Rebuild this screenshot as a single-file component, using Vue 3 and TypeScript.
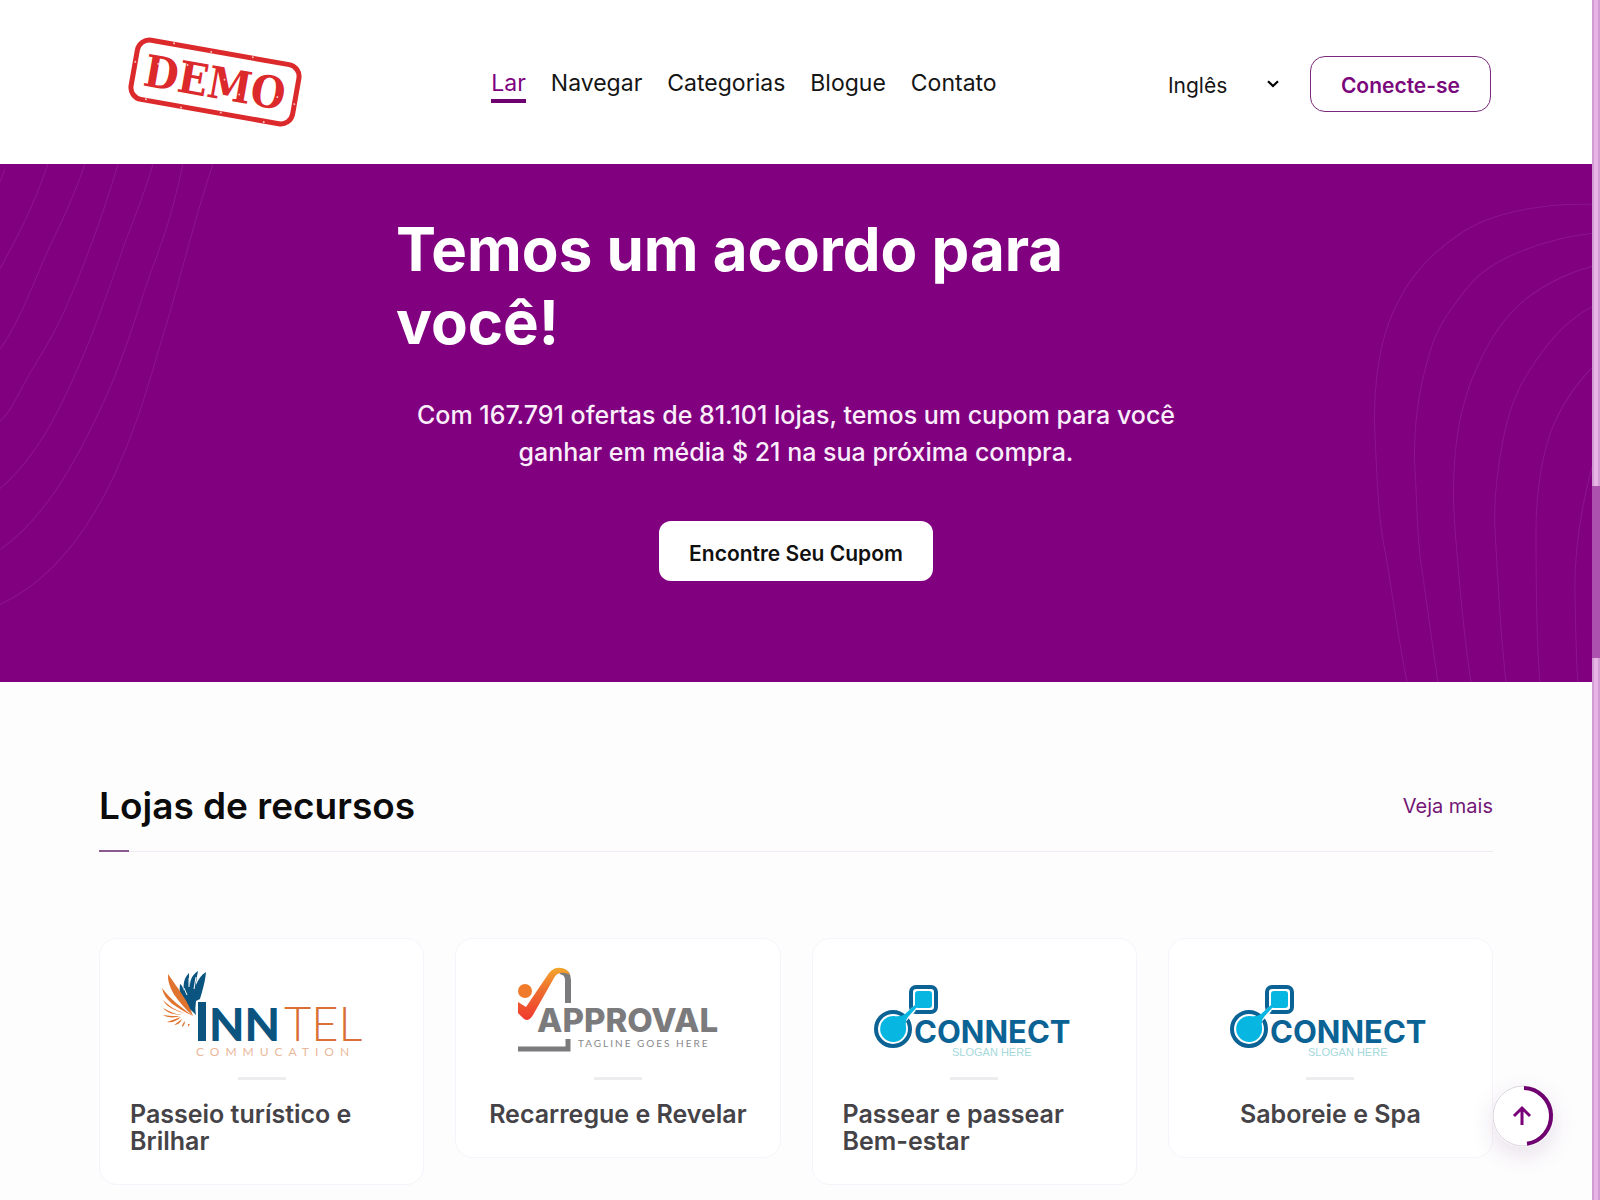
<script setup lang="ts">
import { ref } from 'vue'

interface NavItem {
  label: string
  href: string
  active?: boolean
}

interface Store {
  name: string
  logo: 'inntel' | 'approval' | 'connect'
}

const language = ref('Inglês')

const navItems: NavItem[] = [
  { label: 'Lar', href: '#lar', active: true },
  { label: 'Navegar', href: '#navegar' },
  { label: 'Categorias', href: '#categorias' },
  { label: 'Blogue', href: '#blogue' },
  { label: 'Contato', href: '#contato' },
]

const stores: Store[] = [
  { name: 'Passeio turístico e Brilhar', logo: 'inntel' },
  { name: 'Recarregue e Revelar', logo: 'approval' },
  { name: 'Passear e passear Bem-estar', logo: 'connect' },
  { name: 'Saboreie e Spa', logo: 'connect' },
]

const leftWaves: string[] = [
  'M213 0C192 60 181 110 163 166S108 378 0 426',
  'M183 0C174 40 168 60 153 99S128 178 107 223S52 338 0 373',
  'M153 0C144 30 137 45 127 71S104 138 83 186S38 283 0 314',
  'M118 0C106 40 94 72 80 106S58 158 37 191S14 236 0 249',
  'M85 0C75 28 66 48 53 73S22 150 0 179',
  'M48 0C32 44 18 70 0 101',
  'M5 5L0 17',
]

const rightWaves: string[] = [
  'M253 39C220 38 195 41 167 48S122 65 100 83S62 122 50 153S34 225 36 263S39 340 45 369S60 465 68 501',
  'M253 67C220 71 194 78 167 91S130 116 113 139S92 176 85 203S74 265 76 296S78 360 82 386S94 470 99 501',
  'M253 99C230 105 212 113 193 126S160 155 147 179S129 216 123 239S113 300 115 336S125 460 132 501',
  'M253 138C232 149 215 165 200 186S177 220 170 243S154 315 156 353S162 460 167 501',
  'M253 197C235 215 223 232 213 256S197 320 197 353S197 460 201 501',
  'M253 293C240 340 235 380 236 419S237 480 239 501',
]
</script>

<template>
  <div class="page">
    <header class="header">
      <a class="brand" href="#lar" aria-label="DEMO">
        <svg width="192" height="104" viewBox="0 0 192 104">
          <g transform="rotate(10 87 52)">
            <rect x="5" y="22" width="164" height="60" rx="12" fill="none" stroke="#dc2a2c" stroke-width="5" />
            <text x="87" y="68" text-anchor="middle" class="stamp">DEMO</text>
            <g fill="#fff" opacity="0.7">
              <circle cx="28" cy="44" r="1" /><circle cx="34" cy="58" r="1" /><circle cx="57" cy="40" r="1" />
              <circle cx="66" cy="62" r="1" /><circle cx="96" cy="48" r="1" /><circle cx="113" cy="60" r="1" />
              <circle cx="136" cy="42" r="1" /><circle cx="151" cy="56" r="1" /><circle cx="140" cy="64" r="1" />
              <circle cx="40" cy="21" r="1" /><circle cx="78" cy="23" r="1" /><circle cx="120" cy="21" r="1" />
              <circle cx="58" cy="83" r="1" /><circle cx="98" cy="81" r="1" /><circle cx="142" cy="83" r="1" />
              <circle cx="5" cy="46" r="1" /><circle cx="169" cy="60" r="1" /><circle cx="22" cy="81" r="1" />
            </g>
          </g>
        </svg>
      </a>

      <nav class="nav">
        <a
          v-for="item in navItems"
          :key="item.label"
          :href="item.href"
          :class="['nav-link', { active: item.active }]"
        >{{ item.label }}</a>
      </nav>

      <div class="actions">
        <div class="language">
          <select v-model="language" aria-label="Idioma">
            <option>Inglês</option>
            <option>Português</option>
          </select>
          <svg class="chevron" width="12" height="8" viewBox="0 0 12 8">
            <path d="M1 1.2L6 6L11 1.2" fill="none" stroke="#000" stroke-width="2.2" />
          </svg>
        </div>
        <button type="button" class="login">Conecte-se</button>
      </div>
    </header>

    <section class="hero">
      <svg class="waves waves-left" viewBox="0 0 253 501" preserveAspectRatio="none">
        <path v-for="d in leftWaves" :key="d" :d="d" />
      </svg>
      <svg class="waves waves-right" viewBox="0 0 253 501" preserveAspectRatio="none">
        <path v-for="d in rightWaves" :key="d" :d="d" />
      </svg>
      <div class="hero-inner">
        <h1>Temos um acordo para você!</h1>
        <p>Com 167.791 ofertas de 81.101 lojas, temos um cupom para você ganhar em média $ 21 na sua próxima compra.</p>
        <button type="button" class="cta">Encontre Seu Cupom</button>
      </div>
    </section>

    <main class="stores">
      <div class="section-head">
        <h2>Lojas de recursos</h2>
        <a href="#lojas">Veja mais</a>
      </div>

      <div class="grid">
        <article v-for="store in stores" :key="store.name" class="card">
          <svg v-if="store.logo === 'inntel'" class="logo" width="200" height="96" viewBox="0 0 200 96">
            <g fill="#0b5480">
              <path d="M33 47C22 42 16 33 18 19C20 20 21 23 22 26C21 19 22 13 27 8C27 13 27 17 28 21C28 15 30 10 36 6C35 11 34 16 34 20C36 15 39 10 44 7C43 18 40 27 38 34L34 36Z" />
              <path d="M36 37H44V76H36Z" />
              <path d="M24 40L34 50L33 43Z" />
            </g>
            <path d="M27 13L27 22M34 12L32 24M22 23L25 30" stroke="#fff" stroke-width="1" />
            <g fill="#e0742f">
              <path d="M6 9C5 22 14 35 31 51C26 36 17 25 6 9Z" />
              <path d="M0 23C2 35 13 42 31 51C19 42 9 35 0 23Z" />
              <path d="M1 35C4 42 14 46 24 49C14 45 8 42 1 35Z" />
              <path d="M1 43C5 48 13 50 20 50C12 49 7 46 1 43Z" />
              <path d="M1 50C5 53 13 53 18 51C12 51 7 51 1 50Z" />
              <path d="M5 57C10 58 15 56 19 52C14 54 10 55 5 57Z" />
              <path d="M12 60C16 60 19 57 20 54C17 56 15 58 12 60Z" />
              <path d="M20 62C22 61 23 58 23 56C21 58 20 60 20 62Z" />
              <path d="M26 62L28 59L26 59Z" />
            </g>
            <text x="47" y="76" class="inn">NN</text>
            <text x="122" y="76" class="tel">TEL</text>
            <text x="34" y="91" class="commucation">COMMUCATION</text>
          </svg>

          <svg v-else-if="store.logo === 'approval'" class="logo" width="200" height="96" viewBox="0 0 200 96">
            <defs>
              <linearGradient id="tick" x1="0" y1="1" x2="0" y2="0">
                <stop offset="0" stop-color="#f03a2e" />
                <stop offset="0.55" stop-color="#ee6b2e" />
                <stop offset="1" stop-color="#f3a72c" />
              </linearGradient>
            </defs>
            <path d="M50 38V15Q50 7 42 6" fill="none" stroke="#7b7b7d" stroke-width="6" />
            <path d="M0 84H50V74" fill="none" stroke="#7b7b7d" stroke-width="5" />
            <path d="M0 37L8 42L31 8Q36 2 43 3Q50 4 52 10Q47 7 42 8Q38 9 36 13L15 50Q10 58 5 53L0 48Z" fill="url(#tick)" />
            <circle cx="7" cy="26" r="7" fill="#f07c2b" />
            <text x="19" y="67" class="approval">APPROVAL</text>
            <text x="60" y="82" class="tagline">TAGLINE GOES HERE</text>
          </svg>

          <svg v-else class="logo" width="200" height="96" viewBox="0 0 200 96">
            <rect x="37" y="22" width="25" height="25" rx="5" fill="#fff" stroke="#0b6294" stroke-width="4" />
            <rect x="41" y="26" width="17" height="17" rx="3" fill="#08b6e2" />
            <circle cx="19" cy="64" r="17" fill="#fff" stroke="#0b6294" stroke-width="4" />
            <path d="M29 56L40 44" stroke="#fff" stroke-width="5" />
            <path d="M43 42L34 52Q31 55 32 62A13 13 0 1 1 20 51Q27 52 31 49L41 40Z" fill="#08b6e2" />
            <text x="40" y="78" class="connect">CONNECT</text>
            <text x="78" y="91" class="slogan">SLOGAN HERE</text>
          </svg>

          <span class="rule"></span>
          <h3>{{ store.name }}</h3>
        </article>
      </div>
    </main>

    <button type="button" class="to-top" aria-label="Voltar ao topo">
      <svg width="62" height="62" viewBox="0 0 62 62">
        <circle cx="31" cy="31" r="30" fill="#fff" stroke="#d9d3dc" />
        <path d="M32 3A28 28 0 0 1 35 58.7" fill="none" stroke="#6f0070" stroke-width="4" />
        <path d="M30 40V24M22 31L30 23L38 31" fill="none" stroke="#7a007a" stroke-width="3" />
      </svg>
    </button>

    <div class="scroll-track"><div class="scroll-thumb"></div></div>
  </div>
</template>

<style>
html,
body {
  margin: 0;
  background: #fefdfe;
}
</style>

<style scoped>
.page {
  min-height: 100vh;
  padding-right: 8px;
  box-sizing: border-box;
  font-family: Inter, 'Liberation Sans', sans-serif;
  color: #101010;
}

a {
  text-decoration: none;
}

button {
  font-family: inherit;
  cursor: pointer;
}

.header {
  display: flex;
  align-items: center;
  justify-content: space-between;
  height: 164px;
  padding: 4px 101px 0 128px;
  box-sizing: border-box;
  background: #fff;
}

.brand {
  padding-bottom: 4px;
}

.brand,
.brand svg {
  display: block;
}

.stamp {
  font-family: 'DejaVu Serif Condensed', 'DejaVu Serif', serif;
  font-stretch: condensed;
  font-weight: 700;
  font-size: 44px;
  fill: #dc2a2c;
}

.nav {
  display: flex;
  gap: 25px;
  padding-top: 3px;
}

.nav-link {
  padding-bottom: 1px;
  border-bottom: 4px solid transparent;
  font-size: 23px;
  line-height: 30px;
  color: #151515;
}

.nav-link.active {
  color: #800080;
  border-bottom-color: #6f006f;
}

.actions {
  display: flex;
  align-items: center;
  gap: 31px;
}

.language {
  position: relative;
}

.language select {
  display: block;
  width: 111px;
  padding: 4px 0 0;
  border: 0;
  appearance: none;
  background: transparent;
  font-family: inherit;
  font-size: 21px;
  line-height: 30px;
  color: #151515;
}

.chevron {
  position: absolute;
  right: 0;
  top: 13px;
  pointer-events: none;
}

.login {
  height: 56px;
  padding: 2px 30px 0;
  border: 1px solid #7a2a7c;
  border-radius: 15px;
  background: #fff;
  font-size: 21px;
  font-weight: 600;
  color: #7a087c;
}

.hero {
  position: relative;
  padding: 49px 0 101px;
  background: #800080;
}

.waves {
  position: absolute;
  top: 0;
  width: 253px;
  height: 100%;
  fill: none;
  stroke: #8d148d;
  stroke-width: 1;
}

.waves-left {
  left: 0;
}

.waves-right {
  right: 0;
}

.hero-inner {
  position: relative;
  display: flex;
  flex-direction: column;
  align-items: center;
  max-width: 800px;
  margin: 0 auto;
}

h1 {
  width: 100%;
  margin: 0;
  font-size: 60px;
  line-height: 73px;
  font-weight: 700;
  color: #fff;
}

.hero p {
  margin: 38px 0 0;
  font-size: 25px;
  line-height: 37px;
  font-weight: 500;
  text-align: center;
  color: #fbeefb;
}

.cta {
  height: 60px;
  margin-top: 50px;
  padding: 4px 30px 0;
  border: 0;
  border-radius: 12px;
  background: #fff;
  font-size: 21px;
  font-weight: 600;
  color: #101010;
}

.stores {
  padding: 97px 99px 13px;
}

.section-head {
  position: relative;
  display: flex;
  align-items: center;
  justify-content: space-between;
  padding-bottom: 18px;
  border-bottom: 1px solid #f1e9f4;
}

.section-head::after {
  content: '';
  position: absolute;
  left: 0;
  bottom: -1px;
  width: 30px;
  height: 2px;
  background: #8a5a90;
}

h2 {
  margin: 0;
  font-size: 37px;
  line-height: 54px;
  font-weight: 600;
  color: #0b0b0b;
}

.section-head a {
  font-size: 20px;
  line-height: 54px;
  color: #731675;
}

.grid {
  display: grid;
  grid-template-columns: repeat(4, 1fr);
  align-items: start;
  gap: 31px;
  margin-top: 86px;
}

.card {
  display: flex;
  flex-direction: column;
  align-items: center;
  padding: 26px 30px 29px;
  border: 1px solid #f8f2fa;
  border-radius: 18px;
  background: #fff;
}

.logo {
  display: block;
}

.rule {
  width: 48px;
  height: 3px;
  margin: 16px 0 21px;
  background: #ededf0;
}

h3 {
  margin: 0;
  font-size: 25px;
  line-height: 27px;
  font-weight: 600;
  color: #454347;
}

.inn {
  font-family: Lato, sans-serif;
  font-weight: 900;
  font-size: 46px;
  fill: #0b5480;
}

.tel {
  font-family: Lato, sans-serif;
  font-weight: 300;
  font-size: 47px;
  fill: #d96f35;
}

.commucation {
  font-family: Lato, sans-serif;
  font-size: 12px;
  letter-spacing: 6px;
  fill: #e9b89b;
}

.approval {
  font-weight: 800;
  font-size: 33px;
  fill: #7b7b7d;
}

.tagline {
  font-family: Lato, sans-serif;
  font-size: 10px;
  letter-spacing: 2px;
  fill: #88888a;
}

.connect {
  font-weight: 700;
  font-size: 31px;
  fill: #0b6294;
}

.slogan {
  font-family: 'Liberation Sans', sans-serif;
  font-size: 11px;
  fill: #a5d9dc;
}

.to-top {
  position: fixed;
  right: 46px;
  bottom: 53px;
  width: 62px;
  height: 62px;
  padding: 0;
  border: 0;
  border-radius: 50%;
  background: #fff;
  box-shadow: 0 8px 24px rgba(60, 20, 80, 0.12);
}

.to-top svg {
  display: block;
}

.scroll-track {
  position: fixed;
  top: 0;
  right: 0;
  bottom: 0;
  width: 8px;
  box-sizing: border-box;
  border: solid #cf9dd2;
  border-width: 0 2px;
  background: #e8b4e6;
}

.scroll-thumb {
  height: 172px;
  margin: 486px -2px 0;
  background: #ac52ae;
}
</style>
